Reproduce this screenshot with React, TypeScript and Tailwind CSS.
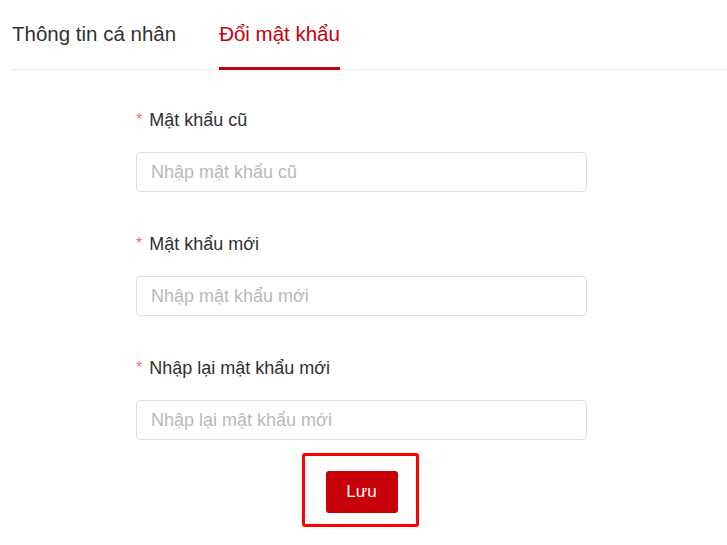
import { useState } from 'react';

const fields = [
  { label: 'Mật khẩu cũ', placeholder: 'Nhập mật khẩu cũ' },
  { label: 'Mật khẩu mới', placeholder: 'Nhập mật khẩu mới' },
  { label: 'Nhập lại mật khẩu mới', placeholder: 'Nhập lại mật khẩu mới' },
];

export default function App() {
  const [activeTab, setActiveTab] = useState<'info' | 'password'>('password');
  const [values, setValues] = useState<string[]>(['', '', '']);

  return (
    <div
      className="min-h-[545px] bg-white"
      style={{ fontFamily: '"Liberation Sans", Arial, sans-serif' }}
    >
      {/* Tabs */}
      <div className="ml-[12px] flex h-[70px] gap-[43px] border-b border-[#ececec]">
        <button
          onClick={() => setActiveTab('info')}
          className={`h-[70px] border-b-[3px] text-[20.5px] leading-[67px] ${
            activeTab === 'info'
              ? 'border-[#c8000a] text-[#c8000a]'
              : 'border-transparent text-[#303133]'
          }`}
        >
          Thông tin cá nhân
        </button>
        <button
          onClick={() => setActiveTab('password')}
          className={`h-[70px] border-b-[3px] text-[20.5px] leading-[67px] ${
            activeTab === 'password'
              ? 'border-[#c8000a] text-[#c8000a]'
              : 'border-transparent text-[#303133]'
          }`}
        >
          Đổi mật khẩu
        </button>
      </div>

      {/* Form */}
      <div className="ml-[136px] w-[451px] pt-[32px]">
        {fields.map((field, i) => (
          <div key={field.label} className={i < fields.length - 1 ? 'mb-[34px]' : ''}>
            <div className="mb-[14px] flex h-[36px] items-center text-[18px] leading-[36px] text-[#303133]">
              <span className="mr-[7px] text-[16px] text-[#f56c6c]">*</span>
              {field.label}
            </div>
            <input
              type="password"
              value={values[i]}
              onChange={(e) => {
                const next = [...values];
                next[i] = e.target.value;
                setValues(next);
              }}
              placeholder={field.placeholder}
              className="block h-[40px] w-full rounded-[4px] border border-[#dcdfe6] px-[14px] text-[18px] text-[#606266] outline-none placeholder:text-[#b9b9b9]"
            />
          </div>
        ))}

        <div className="mt-[13px] flex justify-center">
          <div className="ml-[-3px] rounded-[3px] border-[3px] border-[#ff0000] pb-[11px] pl-[21px] pr-[18px] pt-[15px]">
            <button className="h-[42px] w-[72px] rounded-[3px] bg-[#c8000a] text-[17px] text-white">
              Lưu
            </button>
          </div>
        </div>
      </div>
    </div>
  );
}
